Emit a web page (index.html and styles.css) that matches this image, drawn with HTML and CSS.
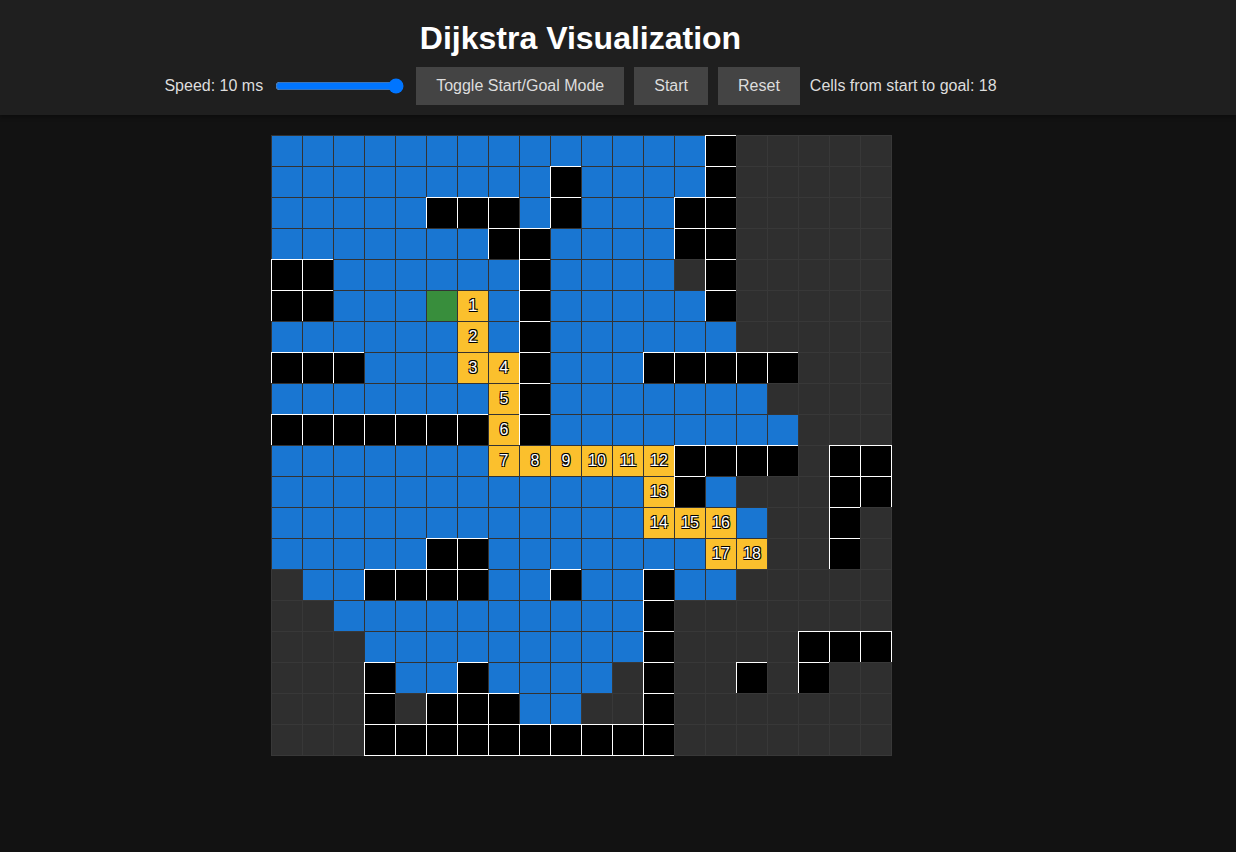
FILE: index.html
```html
<!DOCTYPE html>
<html lang="en">
<head>
<meta charset="utf-8">
<title>Dijkstra Visualization</title>
<link rel="stylesheet" href="styles.css">
</head>
<body>
<header class="header">
  <div class="header-inner">
    <h1 class="title">Dijkstra Visualization</h1>
    <div class="controls">
      <label class="speed" for="speed">Speed: 10 ms</label>
      <input class="slider" id="speed" type="range" min="1" max="100" value="100">
      <button class="btn">Toggle Start/Goal Mode</button>
      <button class="btn">Start</button>
      <button class="btn">Reset</button>
      <span class="info">Cells from start to goal: 18</span>
    </div>
  </div>
</header>
<main class="main">
  <div class="grid">
    <!-- row 0 -->
    <div class="c v"></div><div class="c v"></div><div class="c v"></div><div class="c v"></div><div class="c v"></div><div class="c v"></div><div class="c v"></div><div class="c v"></div><div class="c v"></div><div class="c v"></div><div class="c v"></div><div class="c v"></div><div class="c v"></div><div class="c v"></div><div class="c w"></div><div class="c"></div><div class="c"></div><div class="c"></div><div class="c"></div><div class="c"></div>
    <!-- row 1 -->
    <div class="c v"></div><div class="c v"></div><div class="c v"></div><div class="c v"></div><div class="c v"></div><div class="c v"></div><div class="c v"></div><div class="c v"></div><div class="c v"></div><div class="c w"></div><div class="c v"></div><div class="c v"></div><div class="c v"></div><div class="c v"></div><div class="c w"></div><div class="c"></div><div class="c"></div><div class="c"></div><div class="c"></div><div class="c"></div>
    <!-- row 2 -->
    <div class="c v"></div><div class="c v"></div><div class="c v"></div><div class="c v"></div><div class="c v"></div><div class="c w"></div><div class="c w"></div><div class="c w"></div><div class="c v"></div><div class="c w"></div><div class="c v"></div><div class="c v"></div><div class="c v"></div><div class="c w"></div><div class="c w"></div><div class="c"></div><div class="c"></div><div class="c"></div><div class="c"></div><div class="c"></div>
    <!-- row 3 -->
    <div class="c v"></div><div class="c v"></div><div class="c v"></div><div class="c v"></div><div class="c v"></div><div class="c v"></div><div class="c v"></div><div class="c w"></div><div class="c w"></div><div class="c v"></div><div class="c v"></div><div class="c v"></div><div class="c v"></div><div class="c w"></div><div class="c w"></div><div class="c"></div><div class="c"></div><div class="c"></div><div class="c"></div><div class="c"></div>
    <!-- row 4 -->
    <div class="c w"></div><div class="c w"></div><div class="c v"></div><div class="c v"></div><div class="c v"></div><div class="c v"></div><div class="c v"></div><div class="c v"></div><div class="c w"></div><div class="c v"></div><div class="c v"></div><div class="c v"></div><div class="c v"></div><div class="c"></div><div class="c w"></div><div class="c"></div><div class="c"></div><div class="c"></div><div class="c"></div><div class="c"></div>
    <!-- row 5 -->
    <div class="c w"></div><div class="c w"></div><div class="c v"></div><div class="c v"></div><div class="c v"></div><div class="c s"></div><div class="c p">1</div><div class="c v"></div><div class="c w"></div><div class="c v"></div><div class="c v"></div><div class="c v"></div><div class="c v"></div><div class="c v"></div><div class="c w"></div><div class="c"></div><div class="c"></div><div class="c"></div><div class="c"></div><div class="c"></div>
    <!-- row 6 -->
    <div class="c v"></div><div class="c v"></div><div class="c v"></div><div class="c v"></div><div class="c v"></div><div class="c v"></div><div class="c p">2</div><div class="c v"></div><div class="c w"></div><div class="c v"></div><div class="c v"></div><div class="c v"></div><div class="c v"></div><div class="c v"></div><div class="c v"></div><div class="c"></div><div class="c"></div><div class="c"></div><div class="c"></div><div class="c"></div>
    <!-- row 7 -->
    <div class="c w"></div><div class="c w"></div><div class="c w"></div><div class="c v"></div><div class="c v"></div><div class="c v"></div><div class="c p">3</div><div class="c p">4</div><div class="c w"></div><div class="c v"></div><div class="c v"></div><div class="c v"></div><div class="c w"></div><div class="c w"></div><div class="c w"></div><div class="c w"></div><div class="c w"></div><div class="c"></div><div class="c"></div><div class="c"></div>
    <!-- row 8 -->
    <div class="c v"></div><div class="c v"></div><div class="c v"></div><div class="c v"></div><div class="c v"></div><div class="c v"></div><div class="c v"></div><div class="c p">5</div><div class="c w"></div><div class="c v"></div><div class="c v"></div><div class="c v"></div><div class="c v"></div><div class="c v"></div><div class="c v"></div><div class="c v"></div><div class="c"></div><div class="c"></div><div class="c"></div><div class="c"></div>
    <!-- row 9 -->
    <div class="c w"></div><div class="c w"></div><div class="c w"></div><div class="c w"></div><div class="c w"></div><div class="c w"></div><div class="c w"></div><div class="c p">6</div><div class="c w"></div><div class="c v"></div><div class="c v"></div><div class="c v"></div><div class="c v"></div><div class="c v"></div><div class="c v"></div><div class="c v"></div><div class="c v"></div><div class="c"></div><div class="c"></div><div class="c"></div>
    <!-- row 10 -->
    <div class="c v"></div><div class="c v"></div><div class="c v"></div><div class="c v"></div><div class="c v"></div><div class="c v"></div><div class="c v"></div><div class="c p">7</div><div class="c p">8</div><div class="c p">9</div><div class="c p">10</div><div class="c p">11</div><div class="c p">12</div><div class="c w"></div><div class="c w"></div><div class="c w"></div><div class="c w"></div><div class="c"></div><div class="c w"></div><div class="c w"></div>
    <!-- row 11 -->
    <div class="c v"></div><div class="c v"></div><div class="c v"></div><div class="c v"></div><div class="c v"></div><div class="c v"></div><div class="c v"></div><div class="c v"></div><div class="c v"></div><div class="c v"></div><div class="c v"></div><div class="c v"></div><div class="c p">13</div><div class="c w"></div><div class="c v"></div><div class="c"></div><div class="c"></div><div class="c"></div><div class="c w"></div><div class="c w"></div>
    <!-- row 12 -->
    <div class="c v"></div><div class="c v"></div><div class="c v"></div><div class="c v"></div><div class="c v"></div><div class="c v"></div><div class="c v"></div><div class="c v"></div><div class="c v"></div><div class="c v"></div><div class="c v"></div><div class="c v"></div><div class="c p">14</div><div class="c p">15</div><div class="c p">16</div><div class="c v"></div><div class="c"></div><div class="c"></div><div class="c w"></div><div class="c"></div>
    <!-- row 13 -->
    <div class="c v"></div><div class="c v"></div><div class="c v"></div><div class="c v"></div><div class="c v"></div><div class="c w"></div><div class="c w"></div><div class="c v"></div><div class="c v"></div><div class="c v"></div><div class="c v"></div><div class="c v"></div><div class="c v"></div><div class="c v"></div><div class="c p">17</div><div class="c p">18</div><div class="c"></div><div class="c"></div><div class="c w"></div><div class="c"></div>
    <!-- row 14 -->
    <div class="c"></div><div class="c v"></div><div class="c v"></div><div class="c w"></div><div class="c w"></div><div class="c w"></div><div class="c w"></div><div class="c v"></div><div class="c v"></div><div class="c w"></div><div class="c v"></div><div class="c v"></div><div class="c w"></div><div class="c v"></div><div class="c v"></div><div class="c"></div><div class="c"></div><div class="c"></div><div class="c"></div><div class="c"></div>
    <!-- row 15 -->
    <div class="c"></div><div class="c"></div><div class="c v"></div><div class="c v"></div><div class="c v"></div><div class="c v"></div><div class="c v"></div><div class="c v"></div><div class="c v"></div><div class="c v"></div><div class="c v"></div><div class="c v"></div><div class="c w"></div><div class="c"></div><div class="c"></div><div class="c"></div><div class="c"></div><div class="c"></div><div class="c"></div><div class="c"></div>
    <!-- row 16 -->
    <div class="c"></div><div class="c"></div><div class="c"></div><div class="c v"></div><div class="c v"></div><div class="c v"></div><div class="c v"></div><div class="c v"></div><div class="c v"></div><div class="c v"></div><div class="c v"></div><div class="c v"></div><div class="c w"></div><div class="c"></div><div class="c"></div><div class="c"></div><div class="c"></div><div class="c w"></div><div class="c w"></div><div class="c w"></div>
    <!-- row 17 -->
    <div class="c"></div><div class="c"></div><div class="c"></div><div class="c w"></div><div class="c v"></div><div class="c v"></div><div class="c w"></div><div class="c v"></div><div class="c v"></div><div class="c v"></div><div class="c v"></div><div class="c"></div><div class="c w"></div><div class="c"></div><div class="c"></div><div class="c w"></div><div class="c"></div><div class="c w"></div><div class="c"></div><div class="c"></div>
    <!-- row 18 -->
    <div class="c"></div><div class="c"></div><div class="c"></div><div class="c w"></div><div class="c"></div><div class="c w"></div><div class="c w"></div><div class="c w"></div><div class="c v"></div><div class="c v"></div><div class="c"></div><div class="c"></div><div class="c w"></div><div class="c"></div><div class="c"></div><div class="c"></div><div class="c"></div><div class="c"></div><div class="c"></div><div class="c"></div>
    <!-- row 19 -->
    <div class="c"></div><div class="c"></div><div class="c"></div><div class="c w"></div><div class="c w"></div><div class="c w"></div><div class="c w"></div><div class="c w"></div><div class="c w"></div><div class="c w"></div><div class="c w"></div><div class="c w"></div><div class="c w"></div><div class="c"></div><div class="c"></div><div class="c"></div><div class="c"></div><div class="c"></div><div class="c"></div><div class="c"></div>
  </div>
</main>
</body>
</html>
```
FILE: styles.css
```css
html, body {
  margin: 0;
  padding: 0;
}

body {
  background: #121212;
  color: #dddddd;
  font-family: "Liberation Sans", Arial, sans-serif;
  min-height: 852px;
}

.header {
  background: #1f1f1f;
  padding: 20px 0 10px;
  box-shadow: 0 2px 4px rgba(0, 0, 0, 0.35);
}

.header-inner {
  width: 1161px;
  display: flex;
  flex-direction: column;
  align-items: center;
}

.title {
  margin: 0 0 10px;
  font-size: 32px;
  line-height: 37px;
  font-weight: bold;
  color: #ffffff;
}

.controls {
  display: flex;
  align-items: center;
  gap: 10px;
  font-size: 16px;
}

.speed {
  color: #dddddd;
}

.slider {
  width: 129px;
  margin: 2px;
  accent-color: #0075ff;
}

.btn {
  background: #444444;
  color: #dddddd;
  border: none;
  border-radius: 0;
  padding: 10px 20px;
  font-family: inherit;
  font-size: 16px;
  line-height: 18px;
}

.info {
  color: #dddddd;
}

.main {
  width: 1163px;
  display: flex;
  justify-content: center;
  padding-top: 20px;
}

.grid {
  display: grid;
  grid-template-columns: repeat(20, 31px);
  grid-auto-rows: 31px;
  width: 621px;
  height: 621px;
}

.c {
  width: 32px;
  height: 32px;
  box-sizing: border-box;
  border: 1px solid #383838;
  background: #2f2f2f;
  display: flex;
  align-items: center;
  justify-content: center;
  font-size: 16px;
}

.v {
  background: #1976d2;
  border-color: #333333;
}

.w {
  background: #000000;
  border-color: #ffffff;
}

.s {
  background: #388e3c;
  border-color: #333333;
}

.p {
  background: #fbc02d;
  border-color: #333333;
  color: #ffffff;
  text-shadow: -1px -1px 0 #000, 1px -1px 0 #000, -1px 1px 0 #000, 1px 1px 0 #000;
}
```
